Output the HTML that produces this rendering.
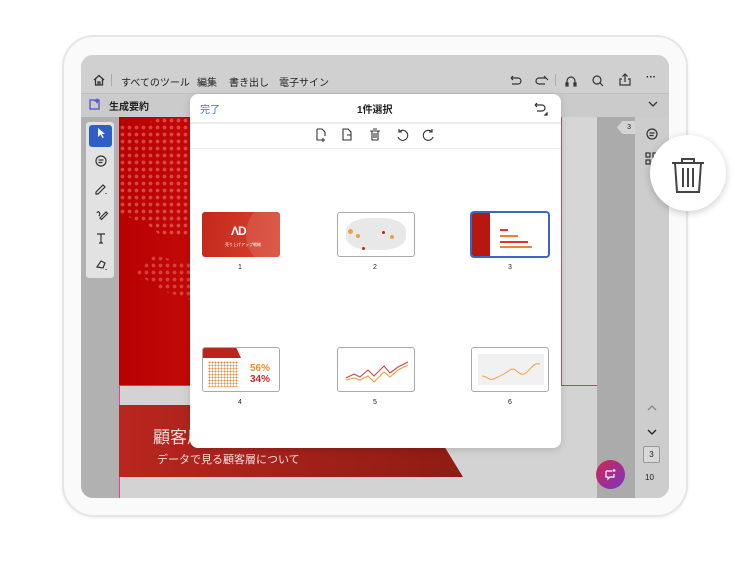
<!DOCTYPE html>
<html><head><meta charset="utf-8"><style>
*{margin:0;padding:0;box-sizing:border-box}
body{width:750px;height:563px;background:#fff;position:relative;overflow:hidden;font-family:"Liberation Sans","Noto Sans CJK JP",sans-serif;color:#222}
.a{position:absolute}
.frame{left:62px;top:35px;width:626px;height:482px;border-radius:32px;background:#fafafa;border:2px solid #e6e6e6;box-shadow:0 1px 3px rgba(0,0,0,.08)}
.screen{left:81px;top:55px;width:588px;height:443px;border-radius:12px;background:#cdcdcd;overflow:hidden}
.t{font-size:10px;color:#222}
svg{position:absolute;overflow:visible}
</style></head><body>
<div class="a frame"></div>
<div class="a screen">
  <div class="a" style="left:0;top:0;width:588px;height:38px;background:#d0d0d0"></div>
  <div class="a" style="left:0;top:38px;width:588px;height:24px;background:#cbcbcb;border-top:1px solid #c0c0c0"></div>
  <div class="a" style="left:0;top:62px;width:38px;height:381px;background:#b1b1b1"></div>
  <div class="a" style="left:5px;top:67px;width:28px;height:156px;background:#e2e2e2;border-radius:3px"></div>
  <div class="a" style="left:8px;top:70px;width:23px;height:22px;background:#2d5fc4;border-radius:3px"></div>
  <div class="a" style="left:38px;top:62px;width:478px;height:268px;background:linear-gradient(90deg,#b80000,#d41a12 40%,#c00 100%)"></div>
  <div class="a" style="left:38px;top:62px;width:72px;height:120px;background-image:radial-gradient(circle,rgba(255,170,170,.4) 1.7px,transparent 2.1px);background-size:7px 7px;clip-path:polygon(0 5%,40% 5%,60% 0,100% 0,100% 100%,60% 100%,40% 90%,0 80%)"></div>
  <div class="a" style="left:55px;top:200px;width:55px;height:45px;background-image:radial-gradient(circle,rgba(255,170,170,.35) 1.7px,transparent 2.1px);background-size:7px 7px;clip-path:polygon(30% 0,100% 20%,100% 100%,50% 80%,0 40%)"></div>
  <div class="a" style="left:38px;top:330px;width:478px;height:113px;background:#d3d3d3;border-left:1px solid #d49;border-top:1px solid #9a5a5a"></div>
  <div class="a" style="left:38px;top:350px;width:344px;height:72px;background:linear-gradient(90deg,#b8261f,#8e1c14);clip-path:polygon(0 0,300px 0,344px 72px,0 72px)"></div>
  <div class="a" style="left:72px;top:368px;font-size:17px;color:#f3dcdc">顧客層</div>
  <div class="a" style="left:76px;top:396px;font-size:11px;color:#f3dcdc">データで見る顧客層について</div>
  <div class="a" style="left:480px;top:62px;width:36px;height:268px;background:#d6d6d6;border-left:1px solid #b06060"></div>
  <div class="a" style="left:516px;top:62px;width:38px;height:381px;background:#ababab"></div>
  <div class="a" style="left:554px;top:62px;width:34px;height:381px;background:#cdcdcd"></div>
  <div class="a" style="left:536px;top:66px;width:18px;height:13px;background:#d4d4d4;clip-path:polygon(30% 0,100% 0,100% 100%,30% 100%,0 50%);font-size:7px;text-align:right;padding-right:4px;line-height:13px">3</div>
</div>
<svg style="left:92px;top:73px" width="14" height="14" viewBox="0 0 14 14" fill="none" stroke="#333" stroke-width="1.3"><path d="M2 7L7 2.5 12 7M3.5 6v6h7V6M6 12V9h2v3"/></svg>
<div class="a" style="left:111px;top:74px;width:1px;height:12px;background:#aaa"></div>
<div class="a t" style="left:121px;top:74px">すべてのツール</div>
<div class="a t" style="left:197px;top:74px">編集</div>
<div class="a t" style="left:229px;top:74px">書き出し</div>
<div class="a t" style="left:279px;top:74px">電子サイン</div>
<svg style="left:509px;top:74px" width="110" height="14" viewBox="0 0 110 14" fill="none" stroke="#333" stroke-width="1.2"><path d="M2 4h7a3 3 0 0 1 0 6H3M2 4l2-2M2 4l2 2"/><path d="M37 4h-7a3 3 0 0 0 0 6h6M37 4l-2-2M37 4l2 2"/><path d="M58 11V7a4 4 0 0 1 8 0v4M57 9h2v3h-2zM65 9h2v3h-2z"/><circle cx="88" cy="6" r="4"/><path d="M91 9l3 3"/></svg>
<div class="a" style="left:555px;top:74px;width:1px;height:12px;background:#aaa"></div>
<svg style="left:618px;top:73px" width="14" height="14" viewBox="0 0 14 14" fill="none" stroke="#333" stroke-width="1.2"><path d="M4 6H2v6h10V6h-2M7 9V1M4.5 3.5L7 1l2.5 2.5"/></svg>
<div class="a t" style="left:646px;top:72px;font-weight:bold">···</div>
<svg style="left:89px;top:98px" width="12" height="12" viewBox="0 0 12 12"><rect x="1" y="2" width="9" height="9" fill="none" stroke="#5b5bd0" stroke-width="1.4"/><path d="M8 0l1 2 2 1-2 1-1 2-1-2-2-1 2-1z" fill="#5b5bd0"/></svg>
<div class="a t" style="left:109px;top:98px;font-weight:bold">生成要約</div>
<svg style="left:648px;top:101px" width="10" height="6" viewBox="0 0 10 6" fill="none" stroke="#333" stroke-width="1.3"><path d="M1 1l4 4 4-4"/></svg>
<svg style="left:96px;top:127px" width="10" height="12" viewBox="0 0 10 12"><path d="M2 1v9l2.5-2.5 2 3.5 1.3-.7-2-3.3H9z" fill="#fff"/></svg>
<svg style="left:94px;top:155px" width="14" height="130" viewBox="0 0 14 130" fill="none" stroke="#333" stroke-width="1.2"><circle cx="7" cy="6" r="5"/><path d="M4.5 5h5M4.5 7.5h4"/><path d="M2 37l7-7 2 2-7 7H2zM12 38v1"/><path d="M3 58c1-3 4 0 2 3M6 63l6-6 1.5 1.5-6 6z"/><path d="M3 79h8M7 79v9M5 88h4"/><path d="M3 112l4-6 4 2-2 5zM12 114v1"/></svg>
<svg style="left:645px;top:127px" width="14" height="40" viewBox="0 0 14 40" fill="none" stroke="#333" stroke-width="1.2"><circle cx="7" cy="7" r="5"/><path d="M4.5 6h5M4.5 8.5h4"/><rect x="1" y="26" width="4" height="4"/><rect x="8" y="26" width="4" height="4"/><rect x="1" y="33" width="4" height="4"/></svg>
<svg style="left:647px;top:404px" width="10" height="32" viewBox="0 0 10 32" fill="none" stroke-width="1.3"><path d="M1 6l4-4 4 4" stroke="#888"/><path d="M1 26l4 4 4-4" stroke="#222"/></svg>
<div class="a" style="left:643px;top:446px;width:17px;height:17px;border:1px solid #999;border-radius:2px;font-size:8px;text-align:center;line-height:15px;background:#d8d8d8">3</div>
<div class="a" style="left:645px;top:473px;font-size:8px">10</div>
<div class="a" style="left:596px;top:460px;width:29px;height:29px;border-radius:50%;background:linear-gradient(135deg,#d0264e,#7a35c8)"></div>
<svg style="left:604px;top:468px" width="13" height="13" viewBox="0 0 13 13" fill="none" stroke="#fff" stroke-width="1.2"><path d="M2 3h6M2 3v6h2v2l2-2h4V6"/><path d="M10 1v3M8.5 2.5h3"/></svg>
<div class="a" style="left:190px;top:94px;width:371px;height:354px;background:#fff;border-radius:8px;box-shadow:0 2px 8px rgba(0,0,0,.15)"></div>
<div class="a" style="left:190px;top:122px;width:371px;height:2px;background:#ececec"></div>
<div class="a" style="left:190px;top:148px;width:371px;height:1px;background:#ececec"></div>
<div class="a" style="left:200px;top:101px;font-size:10px;color:#3a6fd0">完了</div>
<div class="a" style="left:357px;top:101px;font-size:10px;font-weight:bold">1件選択</div>
<svg style="left:533px;top:102px" width="16" height="14" viewBox="0 0 16 14" fill="none" stroke="#333" stroke-width="1.2"><path d="M2 3h7a3 3 0 0 1 0 6H4M2 3l2-2M2 3l2 2"/><path d="M12 13l2-2v2z" fill="#333"/></svg>
<svg style="left:315px;top:128px" width="122" height="14" viewBox="0 0 122 14" fill="none" stroke="#333" stroke-width="1.1"><path d="M2 1h5l3 3v4M2 1v11h5M8 10v4M6 12h4"/><path d="M28 1h5l3 3v8h-8zM32 7h4"/><path d="M55 3h10M57 3v9h6V3M58 1h4M59 5v5M61 5v5"/><path d="M84 4a5 5 0 1 1-1 5M84 1v3h3"/><path d="M117 4a5 5 0 1 0 1 5M117 1v3h-3"/></svg>
<div class="a" style="left:202px;top:212px;width:78px;height:45px;border-radius:3px;background:linear-gradient(100deg,#c4281c,#d8442f);overflow:hidden">
  <div class="a" style="left:44px;top:-5px;width:40px;height:55px;border-radius:50%;background:rgba(255,255,255,.12)"></div>
  <div class="a" style="left:29px;top:12px;font-size:12px;color:#fff;font-weight:bold;letter-spacing:-1px">ΛD</div>
  <div class="a" style="left:23px;top:30px;font-size:4px;color:#fff">売り上げアップ戦略</div>
</div>
<div class="a" style="left:337px;top:212px;width:78px;height:45px;border-radius:3px;border:1px solid #aaa;background:#fff;overflow:hidden">
  <div class="a" style="left:8px;top:5px;width:60px;height:32px;border-radius:40%;background:#e8e8e8"></div>
  <div class="a" style="left:10px;top:16px;width:5px;height:5px;border-radius:50%;background:#f0a040"></div>
  <div class="a" style="left:18px;top:21px;width:4px;height:4px;border-radius:50%;background:#f0a040"></div>
  <div class="a" style="left:52px;top:22px;width:4px;height:4px;border-radius:50%;background:#f0a040"></div>
  <div class="a" style="left:44px;top:18px;width:3px;height:3px;border-radius:50%;background:#b22"></div>
  <div class="a" style="left:24px;top:34px;width:3px;height:3px;border-radius:50%;background:#b22"></div>
</div>
<div class="a" style="left:470px;top:211px;width:80px;height:47px;border-radius:4px;border:2px solid #3a66c8;background:#fff;overflow:hidden">
  <div class="a" style="left:0;top:0;width:18px;height:45px;background:#b8170f"></div>
  <div class="a" style="left:28px;top:16px;width:8px;height:2px;background:#d33"></div>
  <div class="a" style="left:28px;top:22px;width:18px;height:2px;background:#f08030"></div>
  <div class="a" style="left:28px;top:28px;width:28px;height:2px;background:#d33"></div>
  <div class="a" style="left:28px;top:33px;width:32px;height:2px;background:#f08030"></div>
</div>
<div class="a" style="left:202px;top:347px;width:78px;height:45px;border-radius:3px;border:1px solid #aaa;background:#fff;overflow:hidden">
  <div class="a" style="left:0;top:0;width:38px;height:10px;background:#b8261f;clip-path:polygon(0 0,88% 0,100% 100%,0 100%)"></div>
  <div class="a" style="left:5px;top:13px;width:30px;height:26px;background-image:radial-gradient(circle,#e88a3a 0.8px,transparent 1px);background-size:3px 3px"></div>
  <div class="a" style="left:47px;top:15px;font-size:10px;font-weight:bold;color:#f08c2a">56%</div>
  <div class="a" style="left:47px;top:26px;font-size:10px;font-weight:bold;color:#c0282a">34%</div>
</div>
<div class="a" style="left:337px;top:347px;width:78px;height:45px;border-radius:3px;border:1px solid #aaa;background:#fff">
  <svg style="left:6px;top:8px" width="66" height="30" viewBox="0 0 66 30" fill="none" stroke-width="1.1"><path d="M2 22l8-4 6 3 8-7 6 6 10-10 6 7 8-6 10-5" stroke="#c44"/><path d="M2 24l8-2 6 2 8-4 6 6 10-10 6 5 8-7 10-5" stroke="#f0a040"/></svg>
</div>
<div class="a" style="left:471px;top:347px;width:78px;height:45px;border-radius:3px;border:1px solid #aaa;background:#fff">
  <div class="a" style="left:6px;top:6px;width:66px;height:31px;background:#f1f1f1"></div>
  <svg style="left:6px;top:8px" width="66" height="30" viewBox="0 0 66 30" fill="none"><path d="M4 20c6 0 6 6 14 2s8-4 14-8 8 6 14 4 8-12 16-10" stroke="#f0a040" stroke-width="1"/></svg>
</div>
<div class="a" style="left:238px;top:264px;font-size:7px">1</div>
<div class="a" style="left:373px;top:264px;font-size:7px">2</div>
<div class="a" style="left:508px;top:264px;font-size:7px">3</div>
<div class="a" style="left:238px;top:399px;font-size:7px">4</div>
<div class="a" style="left:373px;top:399px;font-size:7px">5</div>
<div class="a" style="left:508px;top:399px;font-size:7px">6</div>
<div class="a" style="left:650px;top:135px;width:76px;height:76px;border-radius:50%;background:#fff;box-shadow:0 2px 8px rgba(0,0,0,.2)"></div>
<svg style="left:671px;top:157px" width="34" height="36" viewBox="0 0 34 36" fill="none" stroke="#444" stroke-width="2"><path d="M1 6h32M11 6V2h12v4M4 6l2 29h22l2-29M12 11v19M17 11v19M22 11v19"/></svg>
</body></html>
